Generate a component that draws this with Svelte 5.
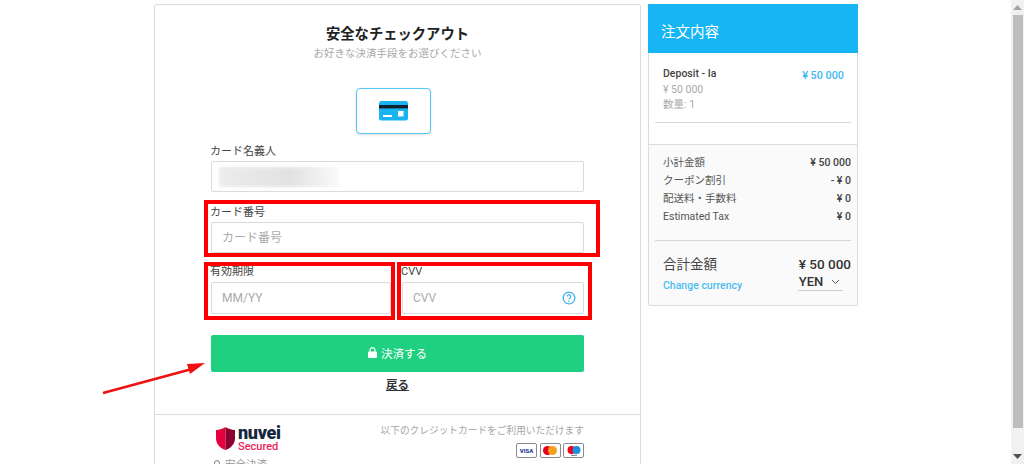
<script>
  const rows = [
    ['小計金額', '¥ 50 000'],
    ['クーポン割引', '- ¥ 0'],
    ['配送料・手数料', '¥ 0'],
    ['Estimated Tax', '¥ 0']
  ];
</script>

<div class="page">
  <main class="content">
    <section class="checkout">
      <div class="form">
        <h1>安全なチェックアウト</h1>
        <p class="sub">お好きな決済手段をお選びください</p>
        <button class="method" aria-label="カード">
          <svg width="29" height="20" viewBox="0 0 29 20">
            <rect y="0" width="29" height="19.5" rx="2.5" fill="#18b4f2" />
            <rect y="4" width="29" height="3.4" fill="#10202c" />
            <rect x="4" y="14" width="9" height="2" fill="#fff" />
            <rect x="19" y="10" width="5.5" height="5.5" fill="#fff" />
          </svg>
        </button>

        <label class="field name">
          <span>カード名義人</span>
          <div class="input"><i class="blur"></i></div>
        </label>
        <label class="field number">
          <span>カード番号</span>
          <div class="input ph">カード番号</div>
        </label>
        <div class="pair">
          <label class="field exp">
            <span>有効期限</span>
            <div class="input ph">MM/YY</div>
          </label>
          <label class="field cvv">
            <span>CVV</span>
            <div class="input ph">
              CVV
              <svg class="help" width="14" height="14" viewBox="0 0 14 14">
                <circle cx="7" cy="7" r="5.8" fill="none" stroke="#3fb4ee" stroke-width="1.3" />
                <path d="M5.2 5.6a1.8 1.8 0 1 1 2.7 1.6c-.6.3-.9.7-.9 1.3" fill="none" stroke="#3fb4ee" stroke-width="1.2" />
                <circle cx="7" cy="10.3" r=".8" fill="#3fb4ee" />
              </svg>
            </div>
          </label>
        </div>
        <button class="pay">
          <svg width="9" height="11" viewBox="0 0 9 11">
            <path d="M2 5V3.2a2.5 2.5 0 0 1 5 0V5" fill="none" stroke="#fff" stroke-width="1.2" />
            <rect y="4.5" width="9" height="6.5" rx="1" fill="#fff" />
          </svg>
          決済する
        </button>
        <a class="back" href="#back">戻る</a>
      </div>

      <footer>
        <div class="secure">
          <div class="logo">
            <svg width="19" height="23" viewBox="0 0 19 23">
              <path d="M9.5 0C7 1.8 3.5 2.8 0 3v8c0 6 4 10 9.5 12z" fill="#e4003f" />
              <path d="M9.5 0c2.500 1.800 6 2.800 9.500 3v8c0 6-4 10-9.500 12z" fill="#8c0030" />
            </svg>
            <div class="brand">
              <b>nuvei</b>
              <em>Secured</em>
            </div>
          </div>
          <div class="safe">
            <svg width="10" height="11" viewBox="0 0 9 11">
              <path d="M2 5V3.200a2.500 2.500 0 0 1 5 0V5" fill="none" stroke="#999" stroke-width="1.200" />
              <rect y="4.500" width="9" height="6.500" rx="1" fill="#999" />
            </svg>
            安全決済
          </div>
        </div>
        <div class="cards">
          <p>以下のクレジットカードをご利用いただけます</p>
          <div class="logos">
            <span class="cc visa">VISA</span>
            <span class="cc">
              <svg width="14" height="9" viewBox="0 0 14 9">
                <circle cx="4.500" cy="4.500" r="4.500" fill="#e8001c" />
                <circle cx="9.500" cy="4.500" r="4.500" fill="#f79e1b" />
              </svg>
            </span>
            <span class="cc">
              <svg width="14" height="10" viewBox="0 0 14 10">
                <circle cx="4.500" cy="4" r="4" fill="#e8001c" />
                <circle cx="9.500" cy="4" r="4" fill="#1a8fe0" />
                <rect x="4" y="8.800" width="6" height="1" fill="#778" />
              </svg>
            </span>
          </div>
        </div>
      </footer>
    </section>

    <aside class="order">
      <header>注文内容</header>
      <div class="item">
        <div class="item-row">
          <div>
            <div class="item-name">Deposit - Ia</div>
            <div class="muted">¥ 50 000</div>
            <div class="muted">数量: 1</div>
          </div>
          <div class="item-price">¥ 50 000</div>
        </div>
        <hr />
      </div>
      <div class="summary">
        <div class="rows">
          {#each rows as [label, value]}
            <div class="row"><span>{label}</span><b>{value}</b></div>
          {/each}
        </div>
        <hr />
        <div class="total">
          <div class="total-left">
            <div class="total-label">合計金額</div>
            <a class="change" href="#currency">Change currency</a>
          </div>
          <div class="total-right">
            <div class="total-value">¥ 50 000</div>
            <div class="currency">
              YEN
              <svg width="9" height="6" viewBox="0 0 9 6"><path d="M1 1l3.500 3.500L8 1" fill="none" stroke="#555" stroke-width="1" /></svg>
            </div>
          </div>
        </div>
      </div>
    </aside>
  </main>

  <div class="scrollbar">
    <svg width="9" height="5" viewBox="0 0 9 5"><path d="M4.500 0L9 5H0z" fill="#a3a3a3" /></svg>
    <div class="thumb"></div>
    <svg width="9" height="5" viewBox="0 0 9 5"><path d="M4.500 5L9 0H0z" fill="#505050" /></svg>
  </div>

  <i class="mark m1"></i>
  <i class="mark m2"></i>
  <i class="mark m3"></i>
  <svg class="arrow" width="110" height="36" viewBox="0 0 110 36">
    <path d="M1 32L90 8" stroke="#f01010" stroke-width="2.500" />
    <path d="M103 2L85 3l3 10z" fill="#f01010" />
  </svg>
</div>

<style>
  :global(body) {
    margin: 0;
    background: #fff;
  }
  .page {
    position: relative;
    display: flex;
    width: 1024px;
    height: 464px;
    overflow: hidden;
    font-family: Roboto, "Noto Sans CJK JP", sans-serif;
    color: #333;
    background: #fff;
  }
  .content {
    flex: 1;
    display: flex;
    align-items: flex-start;
    gap: 7px;
    padding: 4px 0 0 154px;
  }
  .checkout {
    flex: none;
    box-sizing: border-box;
    width: 487px;
    height: 480px;
    border: 1px solid #dcdcdc;
    border-radius: 2px;
  }
  .form {
    display: flex;
    flex-direction: column;
    box-sizing: border-box;
    height: 409px;
    padding: 0 56px;
  }
  h1 {
    margin: 19px 0 0;
    font-size: 14.300px;
    line-height: 20px;
    font-weight: 700;
    text-align: center;
    color: #222;
  }
  .sub {
    margin: 2px 0 0;
    font-size: 10.500px;
    line-height: 16px;
    text-align: center;
    color: #a8a8a8;
  }
  .method {
    align-self: center;
    display: flex;
    align-items: center;
    justify-content: center;
    box-sizing: border-box;
    width: 75px;
    height: 46px;
    margin: 26px 0 0 -9px;
    padding: 0;
    background: #fff;
    border: 1px solid #52c6f5;
    border-radius: 4px;
    box-shadow: 0 1px 3px rgba(0, 0, 0, 0.12);
  }
  .field {
    display: flex;
    flex-direction: column;
    font-size: 11px;
    line-height: 16px;
    color: #444;
  }
  .name { margin-top: 10px; }
  .number { margin-top: 13px; }
  .field span { height: 15px; margin-left: -1px; }
  .input {
    position: relative;
    display: flex;
    align-items: center;
    box-sizing: border-box;
    height: 31px;
    padding: 0 10px;
    border: 1px solid #dadada;
    border-radius: 2px;
    background: #fff;
    margin-top: 2px;
  }
  .pair .input { margin-top: 3px; height: 32px; }
  .ph {
    font-size: 12px;
    color: #aaa;
  }
  .blur {
    position: absolute;
    left: 7px;
    top: 5px;
    width: 120px;
    height: 20px;
    background: linear-gradient(90deg, #ececec, #e2e2e2 60%, #fafafa);
    filter: blur(1.500px);
  }
  .pair {
    display: flex;
    gap: 11px;
    margin-top: 11px;
  }
  .exp { width: 180px; }
  .cvv { width: 182px; }
  .help {
    position: absolute;
    right: 7px;
    top: 8px;
  }
  .pay {
    display: flex;
    align-items: center;
    justify-content: center;
    gap: 4px;
    height: 37px;
    margin-top: 21px;
    padding: 0 0 2px;
    border: 0;
    border-radius: 2px;
    background: #1ed080;
    color: #fff;
    font: inherit;
    font-size: 11.500px;
  }
  .back {
    align-self: center;
    margin-top: 5px;
    font-size: 11.500px;
    line-height: 17px;
    font-weight: 700;
    color: #333;
  }
  footer {
    display: flex;
    justify-content: space-between;
    padding: 10px 56px 0 57px;
    border-top: 1px solid #dcdcdc;
  }
  .logo {
    display: flex;
    align-items: center;
    gap: 3px;
    margin-left: 4px;
  }
  .brand {
    display: flex;
    flex-direction: column;
  }
  .brand b {
    font-size: 18px;
    line-height: 16px;
    font-weight: 900;
    color: #15283d;
    letter-spacing: -0.300px;
  }
  .brand em {
    font-style: normal;
    font-weight: 500;
    font-size: 11px;
    line-height: 11px;
    color: #ec1f5a;
  }
  .safe {
    display: flex;
    align-items: center;
    gap: 3px;
    margin-top: 7px;
    font-size: 10.500px;
    line-height: 12px;
    color: #999;
  }
  .cards {
    display: flex;
    flex-direction: column;
    align-items: flex-end;
  }
  .cards p {
    margin: 0;
    font-size: 9.700px;
    line-height: 12px;
    color: #a6a6a6;
  }
  .logos {
    display: flex;
    gap: 2.500px;
    margin-top: 6px;
  }
  .cc {
    display: flex;
    align-items: center;
    justify-content: center;
    box-sizing: border-box;
    width: 21px;
    height: 15px;
    border: 1px solid #8a8a8a;
    border-radius: 2px;
    background: #fff;
  }
  .visa {
    font-size: 6px;
    font-weight: 900;
    color: #2d3f9e;
  }
  .order {
    flex: none;
    box-sizing: border-box;
    width: 210px;
    border: 1px solid #dcdcdc;
    border-top: 0;
    border-radius: 2px;
    background: #fafafa;
  }
  .order header {
    margin: 0 -1px;
    height: 49px;
    padding-left: 13px;
    line-height: 58px;
    font-size: 14.500px;
    color: #fff;
    background: #17b5f3;
  }
  .item {
    height: 92px;
    box-sizing: border-box;
    padding: 14px 6px 0 6px;
    background: #fff;
    border-bottom: 1px solid #dcdcdc;
  }
  .item-row {
    display: flex;
    justify-content: space-between;
    padding: 0 7px 0 8px;
    height: 55px;
    font-size: 10.500px;
    line-height: 15.500px;
  }
  .item-name {
    font-weight: 500;
    line-height: 14.500px;
    color: #444;
  }
  .muted { color: #aaa; }
  .item-price {
    font-weight: 500;
    font-size: 10.800px;
    line-height: 17px;
    color: #3fb8f0;
  }
  hr {
    margin: 0;
    border: 0;
    border-top: 1px solid #d8d8d8;
  }
  .summary {
    padding: 9px 6px 0;
    height: 160px;
    box-sizing: border-box;
  }
  .rows {
    padding: 0 0 0 8px;
    height: 86px;
  }
  .row {
    display: flex;
    justify-content: space-between;
    height: 18px;
    font-size: 10.500px;
    line-height: 17px;
    color: #555;
  }
  .row b {
    font-weight: 500;
    color: #444;
  }
  .total {
    display: flex;
    justify-content: space-between;
    padding: 13px 0 0 8px;
  }
  .total-label {
    font-size: 13.500px;
    line-height: 20px;
    color: #444;
  }
  .change {
    display: block;
    margin-top: 5px;
    font-size: 10.500px;
    line-height: 14px;
    font-weight: 500;
    text-decoration: none;
    color: #4cbcf2;
  }
  .total-right {
    display: flex;
    flex-direction: column;
    align-items: flex-start;
  }
  .total-value {
    font-size: 13.500px;
    line-height: 20px;
    font-weight: 500;
    color: #333;
  }
  .currency {
    display: flex;
    align-items: center;
    justify-content: space-between;
    box-sizing: border-box;
    width: 45px;
    height: 18px;
    margin: -1px 0 0 -1px;
    padding-left: 1px;
    font-size: 13px;
    font-weight: 500;
    color: #333;
    border-bottom: 1px solid #ccc;
  }
  .currency svg { margin-right: 3px; }
  .scrollbar {
    flex: none;
    display: flex;
    flex-direction: column;
    align-items: center;
    justify-content: space-between;
    box-sizing: border-box;
    width: 13px;
    padding: 5px 0;
    background: #f1f1f1;
  }
  .thumb {
    width: 10px;
    height: 413px;
    margin-top: 3px;
    margin-bottom: 24px;
    background: #bdbdbd;
  }
  .mark {
    position: absolute;
    box-sizing: border-box;
    border: 4px solid #ff0000;
  }
  .m1 { left: 204px; top: 200px; width: 396px; height: 57px; }
  .m2 { left: 204px; top: 262px; width: 191px; height: 58px; }
  .m3 { left: 397px; top: 262px; width: 195px; height: 58px; }
  .arrow {
    position: absolute;
    left: 102px;
    top: 361px;
  }
</style>
